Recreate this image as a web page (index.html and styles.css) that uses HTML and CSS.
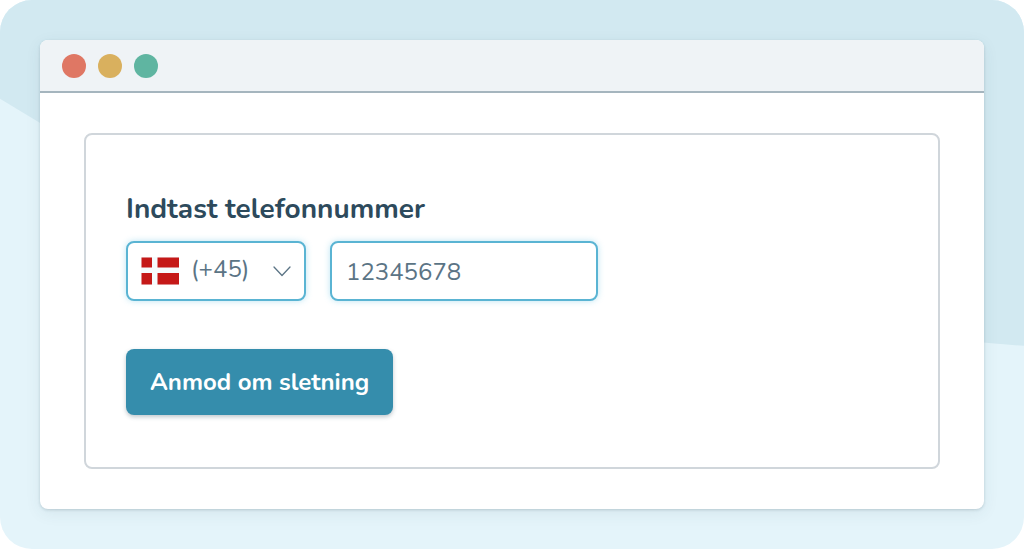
FILE: index.html
```html
<!DOCTYPE html>
<html lang="da">
<head>
    <meta charset="UTF-8">
    <meta name="viewport" content="width=device-width, initial-scale=1.0">
    <title>Anmod om sletning</title>
    <link rel="stylesheet" href="styles.css">
</head>
<body>
    <div class="backdrop">
        <div class="window">
            <div class="titlebar">
                <span class="dot red"></span>
                <span class="dot yellow"></span>
                <span class="dot green"></span>
            </div>
            <div class="content">
                <form class="card">
                    <label class="title" for="phone">Indtast telefonnummer</label>
                    <div class="fields">
                        <div class="country">
                            <!-- Danish flag -->
                            <svg class="flag" viewBox="0 0 38 28" aria-hidden="true">
                                <rect width="38" height="28" fill="#f5fbfd"/>
                                <path d="M0.500 0.500h10.500v10H0.500zM16.500 0.500H38v10H16.500zM0.500 16H11v11.500H0.500zM16.500 16H38v11.500H16.500z" fill="#c51918"/>
                            </svg>
                            <select id="code" aria-label="Landekode">
                                <option value="45">(+45)</option>
                            </select>
                            <svg class="chevron" viewBox="0 0 18 11" aria-hidden="true">
                                <path d="M1 1l8 8.500L17 1" fill="none" stroke="#5b7485" stroke-width="1.300" stroke-linecap="round" stroke-linejoin="round"/>
                            </svg>
                        </div>
                        <input class="phone" type="tel" id="phone" value="12345678">
                    </div>
                    <button class="submit" type="button">Anmod om sletning</button>
                </form>
            </div>
        </div>
    </div>
</body>
</html>
```

FILE: styles.css
```css
* {
    margin: 0;
    padding: 0;
    box-sizing: border-box;
    font-family: Nunito, Lato, sans-serif;
}

body {
    background: white;
}

.backdrop {
    position: relative;
    padding: 40px;
    border-radius: 32px;
    background: #e4f4fa;
    overflow: hidden;
}

/* darker slanted area behind the window */
.backdrop::before {
    content: "";
    position: absolute;
    inset: 0;
    background: #d2e9f1;
    clip-path: polygon(0 0, 100% 0, 100% 63%, 96% 62.4%, 4% 22.5%, 0 18%);
}

.window {
    position: relative;
    border-radius: 8px;
    background: white;
    box-shadow: 0 1px 3px rgba(45, 74, 90, 0.2), 0 4px 16px rgba(45, 74, 90, 0.08);
}

.titlebar {
    display: flex;
    align-items: center;
    gap: 12px;
    height: 53px;
    padding: 0 22px;
    border-bottom: 2px solid #a5b5be;
    border-radius: 8px 8px 0 0;
    background: #eff3f6;
}

.dot {
    width: 24px;
    height: 24px;
    border-radius: 50%;
}

.red {
    background: #df7764;
}

.yellow {
    background: #d9b05e;
}

.green {
    background: #5fb5a1;
}

.content {
    padding: 40px 44px;
}

.card {
    padding: 54px 40px 52px;
    border: 2px solid #d0d6db;
    border-radius: 8px;
}

.title {
    display: block;
    margin-bottom: 12px;
    color: #2d4a5c;
    font-size: 28px;
    font-weight: 700;
    line-height: 40px;
}

.fields {
    display: flex;
    gap: 24px;
    margin-bottom: 48px;
}

.country,
.phone {
    height: 60px;
    border: 2px solid #5ab4d3;
    border-radius: 8px;
    background: white;
    box-shadow: 0 0 6px rgba(90, 190, 225, 0.4);
}

.country {
    display: flex;
    align-items: center;
    position: relative;
    width: 180px;
}

.country select {
    width: 100%;
    height: 100%;
    padding: 0 40px 4px 63px;
    border: none;
    background: none;
    appearance: none;
    color: #5b7485;
    font-size: 24px;
}

.flag,
.chevron {
    position: absolute;
    pointer-events: none;
}

.flag {
    left: 13px;
    width: 38px;
    height: 28px;
}

.chevron {
    right: 13px;
    width: 18px;
    height: 11px;
}

.phone {
    width: 268px;
    padding: 2px 14px 0;
    color: #5b7485;
    font-size: 24px;
}

.submit {
    height: 66px;
    padding: 0 24px;
    border: none;
    border-radius: 8px;
    background: #358dac;
    box-shadow: 0 2px 4px rgba(45, 74, 90, 0.3);
    color: white;
    font-size: 24px;
    font-weight: 700;
    cursor: pointer;
}
```
